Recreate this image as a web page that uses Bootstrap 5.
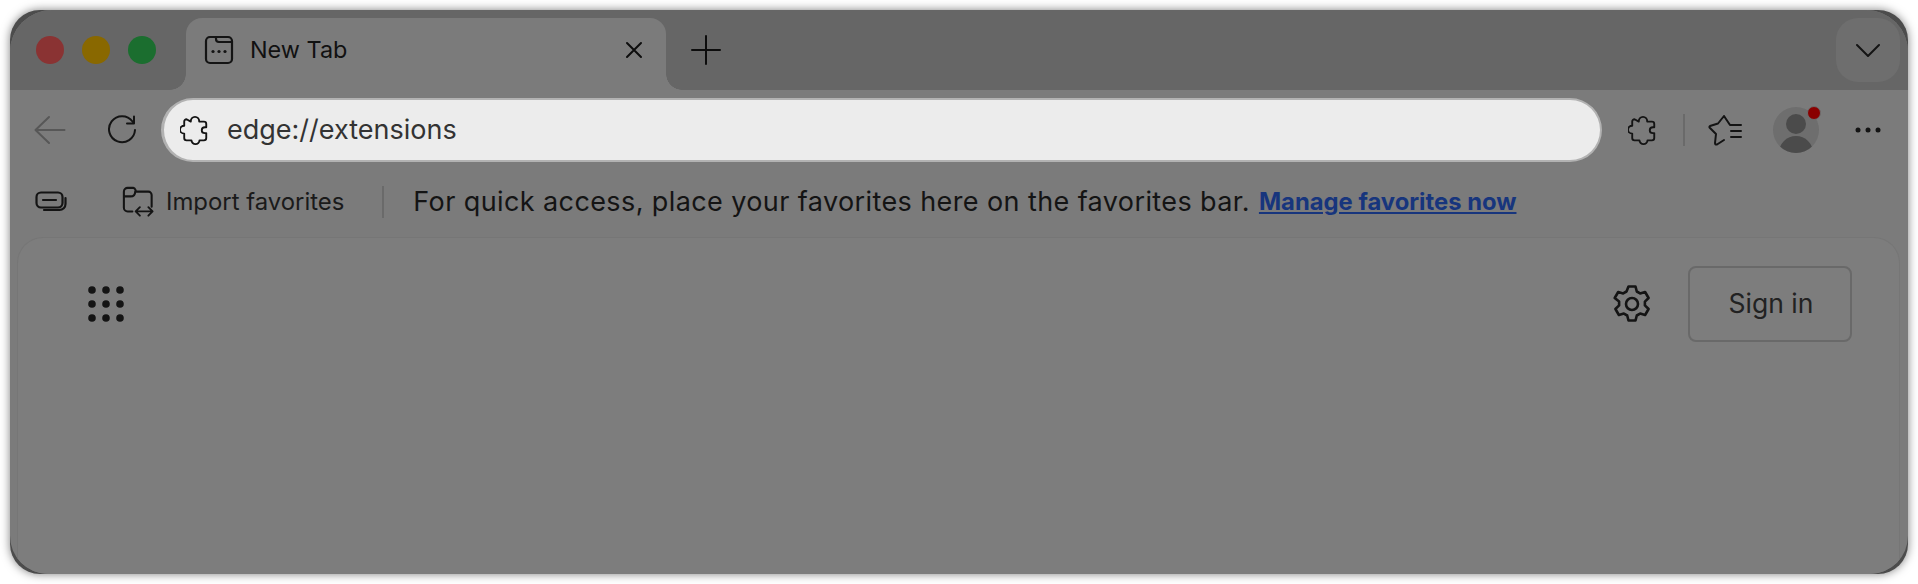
<!DOCTYPE html>
<html lang="en">
<head>
    <meta charset="UTF-8">
    <title>New Tab</title>
    <link href="https://cdn.jsdelivr.net/npm/bootstrap@5.3.0/dist/css/bootstrap.min.css" rel="stylesheet">
    <style>
        html, body { height: 100%; background: #fff; overflow: hidden; }
        body { padding: 10px; font-family: "Inter", "Liberation Sans", sans-serif; color: #111; }
        svg { display: block; flex: none; fill: none; stroke: #141414; stroke-linecap: round; stroke-linejoin: round; }
        .win-shell { width: 1898px; height: 564px; border-radius: 30px; background: #4c4c4c; box-shadow: 0 0 10px rgba(0,0,0,.5); overflow: hidden; }
        .win-inner { height: 100%; border-radius: 42px 42px 38px 38px; overflow: hidden; background: #7b7b7b; }
        .title-strip { flex: none; height: 80px; padding-top: 8px; background: #666; }
        .lights { width: 176px; gap: 18px; padding-left: 26px; height: 64px; }
        .light { width: 28px; height: 28px; border-radius: 50%; }
        .tab-live { width: 480px; height: 72px; background: #7b7b7b; border-radius: 16px 16px 0 0; padding: 0 23px 8px 18px; font-size: 23.4px; position: relative; }
        .tab-live::before, .tab-live::after { content: ""; position: absolute; bottom: 0; width: 16px; height: 16px; background: radial-gradient(circle at var(--cx) 0, #666 15.5px, #7b7b7b 16px); }
        .tab-live::before { left: -16px; --cx: 0; }
        .tab-live::after { right: -16px; --cx: 100%; }
        .more-tabs { width: 64px; height: 64px; border-radius: 22px; background: #6e6e6e; margin-right: 8px; }
        .tool-strip { flex: none; height: 80px; padding: 8px 0 0 24px; }
        .omni { width: 1441px; height: 64px; margin-left: 24px; padding-left: 16px; border-radius: 32px; background: #ececec; border: 2px solid #b2b2b2; border-width: 2px 2px 2px 3px; font-size: 27px; color: #333; }
        .tool-sep { width: 2px; height: 32px; background: #6a6a6a; }
        .avatar-wrap { width: 46px; height: 46px; border-radius: 50%; background: #6e6e6e; position: relative; }
        .avatar-wrap svg { border-radius: 50%; }
        .alert-dot { position: absolute; top: -1px; right: -2px; width: 14px; height: 14px; border-radius: 50%; background: #8a0000; border: 1px solid #6e6e6e; }
        .fav-strip { flex: none; height: 67px; padding: 0 0 3px 25px; }
        .fav-import { font-size: 23.9px; color: #1a1a1a; margin-left: 12px; }
        .fav-sep { width: 2px; height: 32px; background: #6a6a6a; margin: 0 29px 0 38px; }
        .fav-msg { font-size: 27px; letter-spacing: .4px; color: #141414; white-space: nowrap; }
        .fav-link { font-size: 23.8px; font-weight: 700; color: #17357d; margin-left: 9px; }
        .page-pane { flex: 1 1 auto; margin: 0 8px 0 7px; background: #7d7d7d; border: 1px solid #767676; border-bottom: 0; border-radius: 26px 26px 0 0; padding: 28px 47px 0 70px; }
        .app-dots { margin-top: 20px; }
        .signin-btn { width: 164px; height: 76px; border: 2px solid #696969; border-radius: 8px; color: #222; font-size: 26.5px; margin-left: 36px; padding-left: 2px; }
    </style>
</head>
<body>
    <svg width="0" height="0" style="position:absolute">
        <symbol id="puzzle" viewBox="0 0 32 32">
            <path d="M11.500 7c0-3 2-5 4.500-5s4.500 2 4.500 5h5a2.500 2.500 0 0 1 2.500 2.500v3.600h-1.400c-2.100 0-3.400 1.400-3.400 3.100s1.300 3.100 3.400 3.100h1.400v5.200a2.500 2.500 0 0 1-2.500 2.500h-4.700c0 2.200-2 4-4.300 4s-4.300-1.800-4.300-4h-5.200a2.500 2.500 0 0 1-2.500-2.500v-4.700c-2.600 0-4.500-1.900-4.500-4.200s1.900-4.200 4.500-4.200v-4.400a2.500 2.500 0 0 1 2.500-2.500z"/>
        </symbol>
    </svg>

    <div class="win-shell">
        <div class="win-inner d-flex flex-column">
            <div class="title-strip d-flex">
                <div class="lights d-flex align-items-center">
                    <span class="light" style="background:#8a3333"></span>
                    <span class="light" style="background:#896800"></span>
                    <span class="light" style="background:#1b6e2f"></span>
                </div>
                <div class="tab-live d-flex align-items-center">
                    <svg width="30" height="30" viewBox="0 0 30 30" stroke-width="2.200">
                        <rect x="2" y="2" width="26" height="26" rx="4"/>
                        <path d="M12 2v2a3 3 0 0 0 3 3h13"/>
                        <circle cx="9" cy="16.500" r="1.600" fill="#141414" stroke="none"/>
                        <circle cx="15" cy="16.500" r="1.600" fill="#141414" stroke="none"/>
                        <circle cx="21" cy="16.500" r="1.600" fill="#141414" stroke="none"/>
                    </svg>
                    <span class="ms-3">New Tab</span>
                    <svg class="ms-auto" width="18" height="18" viewBox="0 0 18 18" stroke-width="2"><path d="M2 2l14 14M16 2L2 16" stroke="#0d0d0d"/></svg>
                </div>
                <div class="d-flex align-items-center" style="height:64px;padding-left:25px">
                    <svg width="30" height="30" viewBox="0 0 30 30" stroke-width="2"><path d="M15 1v28M1 15h28" stroke="#0d0d0d"/></svg>
                </div>
                <div class="more-tabs ms-auto d-flex align-items-center justify-content-center">
                    <svg width="26" height="14" viewBox="0 0 26 14" stroke-width="2"><path d="M2 2l11 11L24 2"/></svg>
                </div>
            </div>

            <div class="tool-strip d-flex">
                <div class="d-flex align-items-center" style="height:64px">
                    <svg width="32" height="30" viewBox="0 0 32 30" stroke-width="2"><path d="M1.500 15h29M15 2L1.500 15 15 28" stroke="#575757"/></svg>
                    <svg style="margin-left:41px" width="30" height="30" viewBox="0 0 30 30" stroke-width="2"><path d="M25.500 6.500A13 13 0 1 0 28 15M27 1.500v7h-7"/></svg>
                </div>
                <div class="omni d-flex align-items-center">
                    <svg width="30" height="32" viewBox="0 0 32 32" stroke-width="2" stroke="#2a2a2a"><use href="#puzzle"/></svg>
                    <span style="margin-left:17px">edge://extensions</span>
                </div>
                <div class="d-flex align-items-center" style="height:64px;margin-left:26px">
                    <svg width="30" height="32" viewBox="0 0 32 32" stroke-width="2"><use href="#puzzle"/></svg>
                    <span class="tool-sep" style="margin-left:25px"></span>
                    <svg style="margin-left:23px" width="34" height="32" viewBox="0 0 34 32" stroke-width="2">
                        <path d="M16 2l-6 7.500L2 12q-1.200.8 0 2l6 6-1 9q0 2 2 1.500l7-4.500M16 2l6 9h11M23 17h10M23 23h10"/>
                    </svg>
                    <div class="avatar-wrap d-flex" style="margin-left:31px">
                        <svg width="46" height="46" viewBox="0 0 46 46">
                            <circle cx="23" cy="17" r="10" fill="#4b4b4b" stroke="none"/>
                            <ellipse cx="23" cy="46" rx="17" ry="17" fill="#4b4b4b" stroke="none"/>
                        </svg>
                        <span class="alert-dot"></span>
                    </div>
                    <svg style="margin-left:36px" width="26" height="8" viewBox="0 0 26 8"><g fill="#141414" stroke="none"><circle cx="3" cy="4" r="2.500"/><circle cx="13" cy="4" r="2.500"/><circle cx="23" cy="4" r="2.500"/></g></svg>
                </div>
            </div>

            <div class="fav-strip d-flex align-items-center">
                <svg width="32" height="22" viewBox="0 0 32 22" stroke-width="2.200">
                    <rect x="1.500" y="1.500" width="26" height="15" rx="4.500"/>
                    <path d="M8 9h13M30.500 7v6a6 6 0 0 1-6 6H9"/>
                </svg>
                <svg style="margin-left:55px" width="32" height="32" viewBox="0 0 34 32" stroke-width="2.200">
                    <path d="M11 26H6a4 4 0 0 1-4-4V5a4 4 0 0 1 4-4h6a2.500 2.500 0 0 1 2 1.500L15 5h13a3.500 3.500 0 0 1 3.500 3.500V21M2 10h7c4 0 5-2 5-5"/>
                    <path d="M15 26h17M19 21.500L14.500 26l4.500 4.500M28 21.500l4.500 4.500-4.500 4.500" stroke-width="2"/>
                </svg>
                <span class="fav-import">Import favorites</span>
                <span class="fav-sep"></span>
                <span class="fav-msg">For quick access, place your favorites here on the favorites bar.</span>
                <a href="#" class="fav-link">Manage favorites now</a>
            </div>

            <div class="page-pane d-flex align-items-start justify-content-between">
                <svg class="app-dots" width="38" height="38" viewBox="0 0 38 38">
                    <g fill="#141414" stroke="none">
                        <circle cx="4" cy="4" r="3.800"/><circle cx="18" cy="4" r="3.800"/><circle cx="32" cy="4" r="3.800"/>
                        <circle cx="4" cy="18" r="3.800"/><circle cx="18" cy="18" r="3.800"/><circle cx="32" cy="18" r="3.800"/>
                        <circle cx="4" cy="32" r="3.800"/><circle cx="18" cy="32" r="3.800"/><circle cx="32" cy="32" r="3.800"/>
                    </g>
                </svg>
                <div class="d-flex align-items-center">
                    <svg width="40" height="40" viewBox="0 0 40 40" stroke-width="2.600">
                        <circle cx="20" cy="20" r="6"/>
                        <path d="M16.500 2.500h7l1.300 5 3.300 1.900 5-1.400 3.500 6-3.700 3.600v3.800l3.700 3.600-3.500 6-5-1.400-3.300 1.900-1.300 5h-7l-1.300-5-3.300-1.900-5 1.400-3.500-6 3.700-3.600v-3.800L2.700 14l3.500-6 5 1.400 3.300-1.900z"/>
                    </svg>
                    <div class="signin-btn d-flex align-items-center justify-content-center">Sign in</div>
                </div>
            </div>
        </div>
    </div>

    <script src="https://cdn.jsdelivr.net/npm/bootstrap@5.3.0/dist/js/bootstrap.bundle.min.js"></script>
</body>
</html>
